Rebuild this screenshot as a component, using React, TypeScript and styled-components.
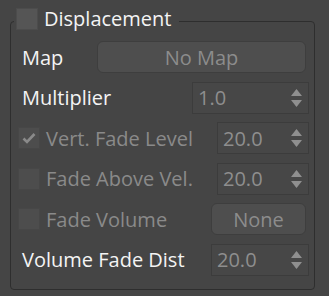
import styled, { createGlobalStyle } from "styled-components";

const GlobalStyle = createGlobalStyle`
  html, body {
    margin: 0;
    background: #454545;
  }
  body {
    font-family: "Open Sans", "Noto Sans", sans-serif;
  }
`;

const Page = styled.div`
  width: 329px;
  height: 296px;
  padding: 8px 0 0 10px;
  box-sizing: border-box;
`;

const Group = styled.fieldset`
  margin: 0;
  width: 305px;
  height: 282px;
  box-sizing: border-box;
  border: 1px solid #2e2e2e;
  border-radius: 4px;
  padding: 3px 5px 0 11px;
`;

const Legend = styled.legend`
  display: flex;
  align-items: flex-start;
  gap: 6px;
  height: 26px;
  padding: 0 8px 0 2px;
  margin-left: -8px;
`;

const Box = styled.span<{ $disabled?: boolean }>`
  display: flex;
  align-items: center;
  justify-content: center;
  width: 22px;
  height: 22px;
  box-sizing: border-box;
  flex: none;
  background: ${(p) => (p.$disabled ? "#4d4d4d" : "#555555")};
  border: 1px solid ${(p) => (p.$disabled ? "#474747" : "#4c4c4c")};
`;

const Title = styled.span`
  color: #f4f4f4;
  font-size: 20px;
  line-height: 22px;
`;

const Row = styled.div`
  display: flex;
  align-items: center;
  height: 40.5px;
`;

const Label = styled.span<{ $disabled?: boolean }>`
  color: ${(p) => (p.$disabled ? "#8a8a8a" : "#f4f4f4")};
  font-size: 20px;
  white-space: nowrap;
`;

const Check = styled.label`
  display: flex;
  align-items: center;
  gap: 6px;
  margin-left: -4px;
`;

const Button = styled.div<{ $w: number }>`
  margin-left: auto;
  margin-right: 3px;
  width: ${(p) => p.$w}px;
  height: 32px;
  box-sizing: border-box;
  border: 1px solid #3e3e3e;
  border-radius: 6px;
  background: #4e4e4e;
  color: #8c8c8c;
  font-size: 20px;
  display: flex;
  align-items: center;
  justify-content: center;
`;

const Spinner = styled.div<{ $w: number }>`
  margin-left: auto;
  width: ${(p) => p.$w}px;
  height: 32px;
  box-sizing: border-box;
  border: 1px solid #3c3c3c;
  background: #474747;
  display: flex;
  align-items: center;
  padding: 0 6px 0 5px;
  color: #8e8e8e;
  font-size: 20px;
`;

const Value = styled.span`
  flex: 1;
`;

const Arrows = styled.svg`
  flex: none;
`;

function Spin({ w, value }: { w: number; value: string }) {
  return (
    <Spinner $w={w}>
      <Value>{value}</Value>
      <Arrows width="11" height="18" viewBox="0 0 11 18">
        <path d="M5.5 0 L11 7 L0 7 Z" fill="#8f8f8f" />
        <path d="M0 11 L11 11 L5.5 18 Z" fill="#8f8f8f" />
      </Arrows>
    </Spinner>
  );
}

function Tick() {
  return (
    <svg width="14" height="12" viewBox="0 0 14 12">
      <path
        d="M1.5 6.5 L5 10 L12.5 2"
        stroke="#8a8a8a"
        strokeWidth="2.6"
        fill="none"
      />
    </svg>
  );
}

export default function App() {
  return (
    <>
      <GlobalStyle />
      <Page>
        <Group>
          <Legend>
            <Box />
            <Title>Displacement</Title>
          </Legend>
          <Row>
            <Label>Map</Label>
            <Button $w={209}>No Map</Button>
          </Row>
          <Row>
            <Label>Multiplier</Label>
            <Spin w={117} value="1.0" />
          </Row>
          <Row>
            <Check>
              <Box $disabled>
                <Tick />
              </Box>
              <Label $disabled>Vert. Fade Level</Label>
            </Check>
            <Spin w={92} value="20.0" />
          </Row>
          <Row>
            <Check>
              <Box $disabled />
              <Label $disabled>Fade Above Vel.</Label>
            </Check>
            <Spin w={92} value="20.0" />
          </Row>
          <Row>
            <Check>
              <Box $disabled />
              <Label $disabled>Fade Volume</Label>
            </Check>
            <Button $w={95}>None</Button>
          </Row>
          <Row>
            <Label>Volume Fade Dist</Label>
            <Spin w={98} value="20.0" />
          </Row>
        </Group>
      </Page>
    </>
  );
}
